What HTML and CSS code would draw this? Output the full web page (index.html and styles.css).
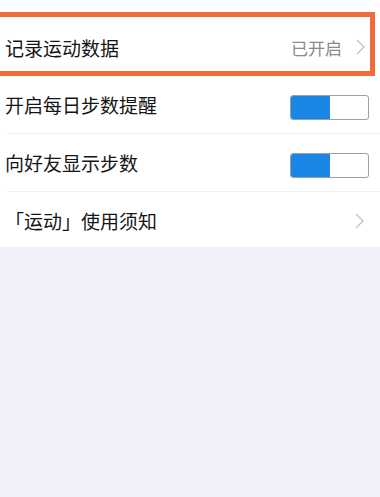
FILE: index.html
```html
<!DOCTYPE html>
<html lang="zh-CN">
<head>
    <meta charset="UTF-8">
    <title>运动设置</title>
    <meta name="viewport" content="width=device-width, initial-scale=1">
    <link rel="stylesheet" href="styles.css">
</head>
<body>
<div class="settings">
    <div class="settings--list">
        <div class="settings--row highlight">
            <span class="settings--label">记录运动数据</span>
            <span class="settings--value">已开启</span>
            <svg class="chevron" width="9" height="16" viewBox="0 0 9 16"><path d="M1 1 L8 8 L1 15" fill="none" stroke="#c4c4c8" stroke-width="1.4"/></svg>
        </div>
        <div class="settings--row">
            <span class="settings--label">开启每日步数提醒</span>
            <span class="switch on"><span class="switch--knob"></span></span>
        </div>
        <div class="settings--row">
            <span class="settings--label">向好友显示步数</span>
            <span class="switch on"><span class="switch--knob"></span></span>
        </div>
        <div class="settings--row last">
            <span class="settings--label">「运动」使用须知</span>
            <svg class="chevron" width="9" height="16" viewBox="0 0 9 16"><path d="M1 1 L8 8 L1 15" fill="none" stroke="#c4c4c8" stroke-width="1.4"/></svg>
        </div>
    </div>
</div>
</body>
</html>
```

FILE: styles.css
```css
*, *:before, *:after {
    box-sizing: border-box;
    padding: 0;
    margin: 0;
}

body {
    background: #f1f0f9;
    overflow: hidden;
    font-family: "Noto Sans CJK SC", "Noto Sans", sans-serif;
    color: #151515;
}

.settings {
    width: 100vw;
    height: 100vh;
    overflow: hidden;
}

.settings--list {
    background: #ffffff;
    padding-top: 12px;
}

.settings--row {
    display: flex;
    align-items: center;
    height: 58px;
    margin-left: 7px;
    padding-right: 11px;
    border-bottom: 1px solid #efeff2;
    font-size: 19px;
}

.settings--row.last {
    border-bottom: 0;
    height: 55px;
    padding-top: 2px;
}

.last .chevron {
    margin-right: 5px;
}

.settings--label {
    flex-grow: 1;
    margin-left: -2px;
}

.highlight.settings--row {
    height: 64px;
    margin-left: -6px;
    margin-right: 5px;
    padding-left: 8px;
    padding-right: 5px;
    padding-top: 6px;
    border: 5px solid #f06a3c;
}

.settings--value {
    color: #8a8a8e;
    font-size: 17px;
    margin-right: 14px;
}

.chevron {
    display: block;
}

.switch {
    display: flex;
    width: 79px;
    height: 25px;
    border: 1px solid #8fa3b3;
    border-radius: 3px;
    background: #ffffff;
    overflow: hidden;
    margin-top: 6px;
}

.switch--knob {
    width: 39px;
    height: 100%;
    background: #1a86e6;
}
```
